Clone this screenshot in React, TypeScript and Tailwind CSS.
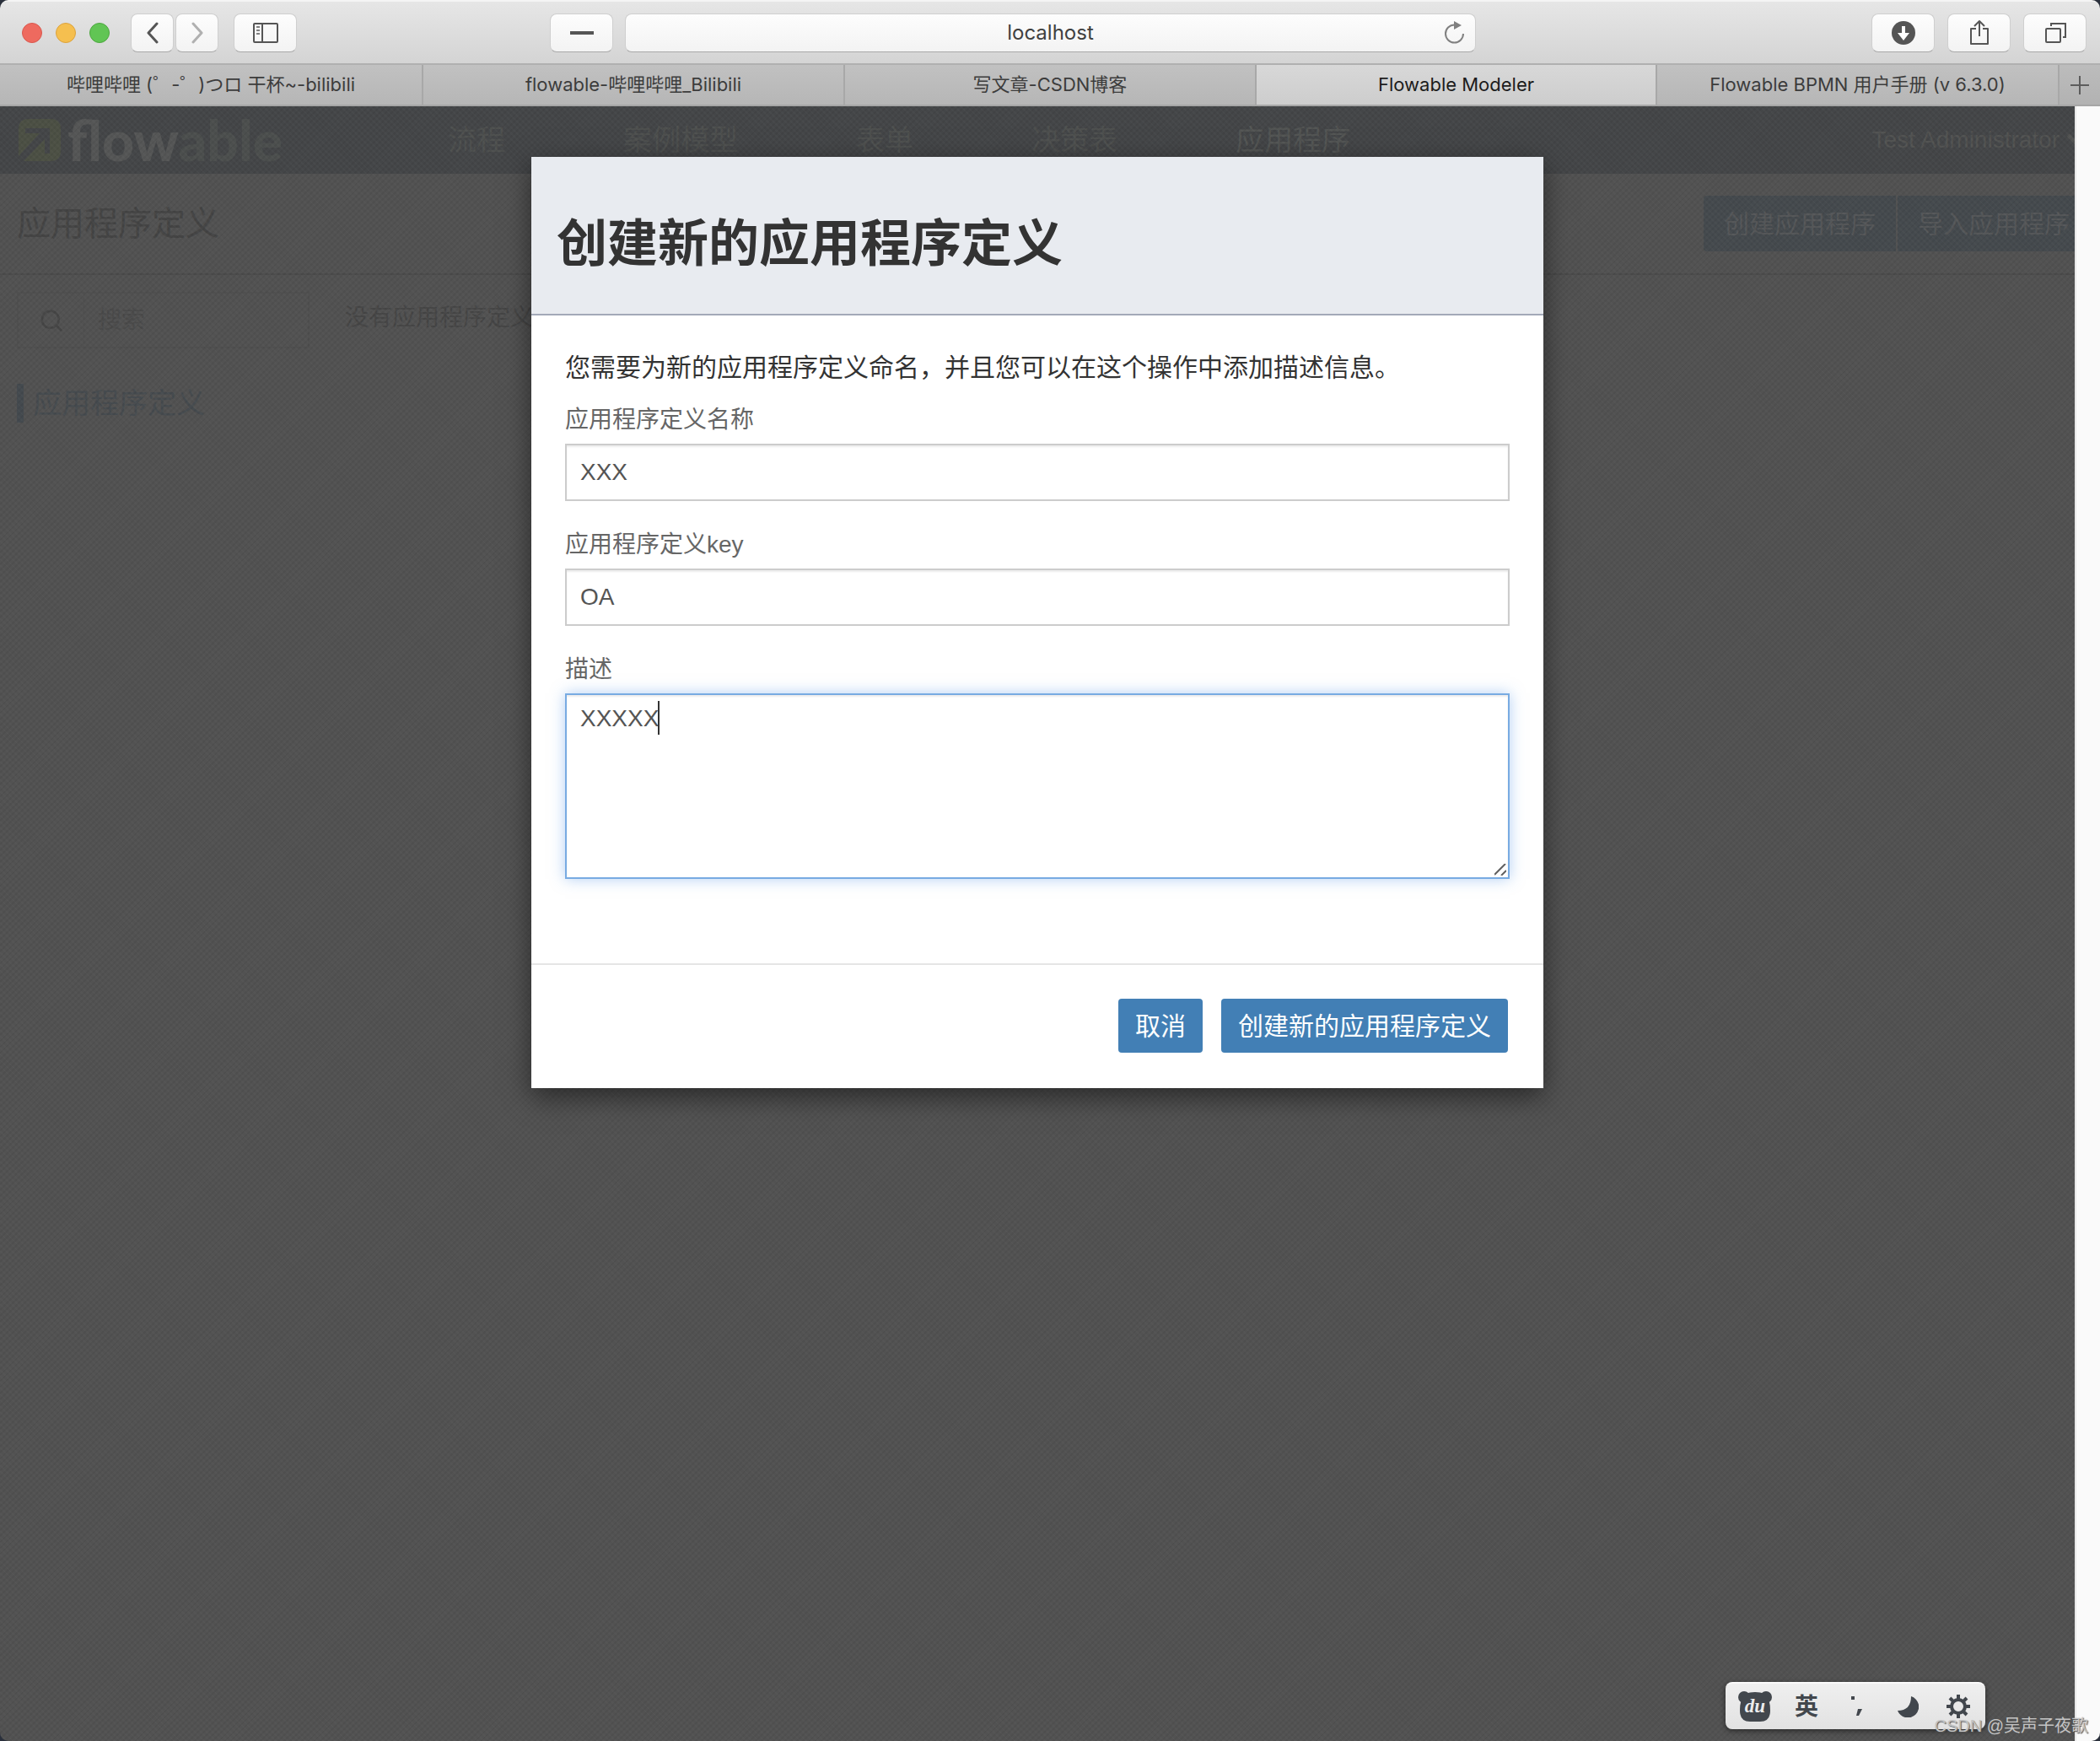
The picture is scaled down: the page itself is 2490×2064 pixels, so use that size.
import { useState } from "react";
import { LuSearch } from "react-icons/lu";

const tabs = [
	{ title: "哔哩哔哩 (゜-゜)つロ 干杯~-bilibili", active: false },
	{ title: "flowable-哔哩哔哩_Bilibili", active: false },
	{ title: "写文章-CSDN博客", active: false },
	{ title: "Flowable Modeler", active: true },
	{ title: "Flowable BPMN 用户手册 (v 6.3.0)", active: false },
];

const navItems = ["流程", "案例模型", "表单", "决策表", "应用程序"];

const toolButton =
	"h-[46px] flex items-center justify-center shrink-0 rounded-lg border border-[#cfcfcf] border-b-[#a9a9a9] bg-linear-to-b from-[#fdfdfd] to-[#f3f3f3] text-[#555555]";

function Toolbar() {
	return (
		<div className="h-[75px] grid grid-cols-[652fr_1098fr_740fr] items-center border-t-2 border-[#f4f4f4] bg-linear-to-b from-[#e6e6e6] to-[#d4d4d4]">
			<div className="flex items-center pl-[26px]">
				<div className="flex gap-4">
					<span className="size-6 rounded-full border border-[#d9584e] bg-[#ee6a5f]" />
					<span className="size-6 rounded-full border border-[#dca23c] bg-[#f5bf4f]" />
					<span className="size-6 rounded-full border border-[#4da73f] bg-[#61c554]" />
				</div>
				<div className="flex gap-0.5 ml-[25px]">
					<button aria-label="Back" className={`${toolButton} w-[51px]`}>
						<svg width="16" height="26" viewBox="0 0 16 26" fill="none" stroke="currentColor" strokeWidth="3" strokeLinecap="round" strokeLinejoin="round">
							<path d="M13 2L3 13l10 11" />
						</svg>
					</button>
					<button aria-label="Forward" className={`${toolButton} w-[51px]`}>
						<svg width="16" height="26" viewBox="0 0 16 26" fill="none" stroke="#b0b0b0" strokeWidth="3" strokeLinecap="round" strokeLinejoin="round">
							<path d="M3 2l10 11L3 24" />
						</svg>
					</button>
				</div>
				<button aria-label="Sidebar" className={`${toolButton} w-[75px] ml-[18px]`}>
					<svg width="30" height="24" viewBox="0 0 30 24" fill="none" stroke="currentColor" strokeWidth="2">
						<rect x="1" y="1" width="28" height="22" rx="1" />
						<path d="M11 1v22" />
						<path d="M4 5h4M4 9h4M4 13h4" stroke="#808080" />
					</svg>
				</button>
			</div>
			<div className="flex gap-3.5">
				<button aria-label="Tab group" className={`${toolButton} w-[75px]`}>
					<span className="w-7 h-1 bg-[#555555]" />
				</button>
				<div className={`${toolButton} min-w-0 grow relative`}>
					<input aria-label="Address" defaultValue="localhost" className="w-full bg-transparent text-center text-2xl text-[#404040] outline-none" />
					<button aria-label="Reload" className="absolute right-3 top-2 text-[#808080]">
						<svg width="24" height="28" viewBox="0 0 24 28" fill="none" stroke="currentColor" strokeWidth="2">
							<path d="M22 15a10.500 10.500 0 1 1-10.500-10.500" />
							<path d="M11 0v10L20 5z" fill="currentColor" stroke="none" />
						</svg>
					</button>
				</div>
			</div>
			<div className="flex justify-end gap-[15px] pr-4">
				<button aria-label="Downloads" className={`${toolButton} w-[75px]`}>
					<svg width="28" height="28" viewBox="0 0 28 28">
						<circle cx="14" cy="14" r="14" fill="currentColor" />
						<path d="M12 6h4v8h5l-7 9-7-9h5z" fill="#fff" />
					</svg>
				</button>
				<button aria-label="Share" className={`${toolButton} w-[75px]`}>
					<svg width="24" height="32" viewBox="0 0 24 32" fill="none" stroke="currentColor" strokeWidth="2" strokeLinejoin="round">
						<path d="M8 11H2v18h20V11h-6M12 20V2M6 8l6-6 6 6" />
					</svg>
				</button>
				<button aria-label="Show tabs" className={`${toolButton} w-[75px]`}>
					<svg width="26" height="26" viewBox="0 0 26 26" fill="none" stroke="currentColor" strokeWidth="2">
						<rect x="2" y="8" width="17" height="16" rx="1" />
						<path d="M8 5V2h17v16h-3" />
					</svg>
				</button>
			</div>
		</div>
	);
}

function TabBar() {
	return (
		<div className="h-[51px] grid grid-cols-[502fr_500fr_488fr_475fr_477fr_48px] border-t-2 border-b-2 border-t-[#b0b0b0] border-b-[#a6a6a6] text-[22px] text-[#3c3c3c]">
			{tabs.map((tab) => (
				<button
					key={tab.title}
					className={`min-w-0 truncate border-r-2 border-[#a8a8a8] ${tab.active ? "bg-linear-to-b from-[#d8d8d8] to-[#cdcdcd] text-[#1c1c1c]" : "bg-linear-to-b from-[#c1c1c1] to-[#b6b6b6]"}`}
				>
					{tab.title}
				</button>
			))}
			<button aria-label="New tab" className="flex items-center justify-center bg-linear-to-b from-[#bcbcbc] to-[#b2b2b2]">
				<svg width="22" height="22" viewBox="0 0 22 22" stroke="#5c5c5c" strokeWidth="2">
					<path d="M11 0v22M0 11h22" />
				</svg>
			</button>
		</div>
	);
}

function Logo() {
	return (
		<div className="flex items-center gap-2">
			<svg width="50" height="50" viewBox="0 0 50 50">
				<path d="M12 0h26q12 0 12 12v26q0 12-12 12H6L0 44V12Q0 0 12 0z" fill="#4c5044" />
				<path d="M8 11h29v30h-6V24L6 50l-6-6 25-27H8z" fill="#444648" />
			</svg>
			<span className="font-[Lato,sans-serif] font-black text-[66px] leading-[66px] text-[#555656]">
				flow<span className="text-[#4c4f4e]">able</span>
			</span>
		</div>
	);
}

function ModelerPage() {
	return (
		<div className="min-w-0 grow overflow-hidden whitespace-nowrap">
			<header className="h-20 flex items-center bg-[#444648] text-[#4e504f]">
				<div className="w-[531px] shrink-0 pl-[22px]">
					<Logo />
				</div>
				<nav className="flex gap-[140px] text-[34px]">
					{navItems.map((item) => (
						<a key={item} href="#" className={item === "应用程序" ? "text-[#535554]" : ""}>{item}</a>
					))}
				</nav>
				<button className="flex items-center gap-2 ml-auto -mr-3.5 text-[28px] text-[#525352]">
					Test Administrator
					<svg width="24" height="16" viewBox="0 0 24 16" fill="none" stroke="currentColor" strokeWidth="5">
						<path d="M2 2l10 10L22 2" />
					</svg>
				</button>
			</header>
			<div className="h-[120px] flex items-center justify-between pl-5 border-b-2 border-[#4b4b4b]">
				<h2 className="text-[40px] text-[#444444]">应用程序定义</h2>
				<div className="flex gap-0.5 -mr-[18px] text-[30px] text-[#555759]">
					<button className="h-[66px] px-6 rounded-l bg-[#454a4e]">创建应用程序</button>
					<button className="h-[66px] px-6 rounded-r bg-[#454a4e]">导入应用程序</button>
				</div>
			</div>
			<div className="flex gap-[42px] pl-5 pt-5 text-[28px] text-[#464646]">
				<aside className="w-[347px]">
					<label className="h-[67px] flex items-center border-2 border-[#4f4f4f]">
						<span className="w-[78px] h-full shrink-0 flex items-center justify-center border-r border-[#4f4f4f]">
							<LuSearch size={30} />
						</span>
						<input placeholder="搜索" className="min-w-0 grow pl-4 outline-none placeholder:text-[#4a4a4a]" />
					</label>
					<a href="#" className="h-[46px] flex items-center mt-[42px] pl-[11px] border-l-8 border-[#444a4f] text-[34px] text-[#464b4f]">
						应用程序定义
					</a>
				</aside>
				<p className="pt-2.5">没有应用程序定义</p>
			</div>
		</div>
	);
}

const fieldClass = "block w-full px-4 border-2 border-[#cccccc] bg-white text-[28px] text-[#555555] shadow-[inset_0_2px_2px_rgba(0,0,0,0.075)] outline-none";
const labelClass = "block h-[42px] leading-[42px] text-[28px] text-[#666666]";

function CreateAppDialog() {
	const [name, setName] = useState("XXX");
	const [key, setKey] = useState("OA");
	const [description, setDescription] = useState("XXXXX");

	return (
		<div role="dialog" aria-labelledby="dialog-title" className="w-[1200px] max-w-full bg-white shadow-[0_10px_30px_rgba(0,0,0,0.5)]">
			<div className="px-[30px] pt-[59px] pb-[37px] border-b-2 border-[#a3a9b8] bg-[#e8ebf0]">
				<h1 id="dialog-title" className="text-[60px] leading-[90px] font-bold text-[#333333]">创建新的应用程序定义</h1>
			</div>
			<form className="px-10 pt-[41px] pb-[100px]">
				<p className="h-[62px] leading-[42px] text-[30px] text-[#333333]">您需要为新的应用程序定义命名，并且您可以在这个操作中添加描述信息。</p>
				<label htmlFor="app-name" className={labelClass}>应用程序定义名称</label>
				<input id="app-name" value={name} onChange={(e) => setName(e.target.value)} className={`${fieldClass} h-[68px] mt-[7px] mb-[31px]`} />
				<label htmlFor="app-key" className={labelClass}>应用程序定义key</label>
				<input id="app-key" value={key} onChange={(e) => setKey(e.target.value)} className={`${fieldClass} h-[68px] mt-[7px] mb-[31px]`} />
				<label htmlFor="app-description" className={labelClass}>描述</label>
				<div className="relative mt-[7px]">
					<textarea
						id="app-description"
						value={description}
						onChange={(e) => setDescription(e.target.value)}
						className="block w-full h-[220px] px-4 py-2 resize-none border-2 border-[#78abe2] bg-white text-[28px] leading-10 text-[#555555] shadow-[inset_0_2px_2px_rgba(0,0,0,0.075),0_0_16px_rgba(102,160,233,0.5)] outline-none"
					/>
					<span className="absolute left-[110px] top-[9px] w-0.5 h-10 bg-[#333333]" />
					<svg className="absolute right-1 bottom-1" width="14" height="14" viewBox="0 0 14 14" stroke="#606060" strokeWidth="2">
						<path d="M0 13L13 0M8 14l6-6" />
					</svg>
				</div>
			</form>
			<div className="flex justify-end gap-[22px] pt-10 pr-[42px] pb-[42px] border-t-2 border-[#e5e5e5] text-[30px] text-white">
				<button className="h-16 px-5 rounded bg-[#427fb5]">取消</button>
				<button className="h-16 px-5 rounded bg-[#427fb5]">创建新的应用程序定义</button>
			</div>
		</div>
	);
}

function InputMethodBar() {
	return (
		<div className="absolute right-[136px] bottom-[14px] w-[308px] h-14 grid grid-cols-[62px_60px_60px_60px_60px] place-items-center pl-1 rounded-lg border-t-2 border-[#fafafa] bg-linear-to-b from-[#efefef] to-[#e2e2e2] text-[#42474d] shadow-[0_2px_6px_rgba(0,0,0,0.5)]">
			<svg width="40" height="36" viewBox="0 0 40 36" fill="currentColor">
				<circle cx="7" cy="7" r="7" />
				<circle cx="33" cy="7" r="7" />
				<path d="M8 3Q20-1 32 3q6 6 6 20 0 13-12 13H14Q2 36 2 23 2 9 8 3z" />
				<text x="20" y="25" textAnchor="middle" fill="#ececec" fontSize="23" fontStyle="italic" fontWeight="700" fontFamily="Liberation Serif, serif">du</text>
			</svg>
			<span className="text-[28px] leading-8 font-bold">英</span>
			<svg width="14" height="24" viewBox="0 0 14 24" fill="currentColor">
				<path d="M0 0h4v4H0zM8 15h5l-4 8H6z" />
			</svg>
			<svg width="26" height="26" viewBox="0 0 26 26" fill="currentColor">
				<path d="M17 1A13 13 0 1 1 1 18Q17 18 17 1z" />
			</svg>
			<svg width="28" height="28" viewBox="0 0 28 28" fill="none" stroke="currentColor" strokeWidth="4">
				<circle cx="14" cy="14" r="8" />
				<path d="M14 0v5M14 23v5M0 14h5M23 14h5M4 4l4 4M20 20l4 4M24 4l-4 4M8 20l-4 4" />
			</svg>
		</div>
	);
}

export default function App() {
	return (
		<div className="bg-[#2a303c]">
			<div className="relative min-h-screen flex flex-col overflow-hidden rounded-[10px] bg-[#525252] font-[Inter,'Noto_Sans_CJK_SC',sans-serif]">
				<Toolbar />
				<TabBar />
				<main className="relative grow flex font-['Liberation_Sans','Noto_Sans_CJK_SC',sans-serif]">
					<ModelerPage />
					<div className="w-[30px] shrink-0 border-l-2 border-[#e8e8e8] bg-[#fafafa]" />
					{/* Woven backdrop behind the dialog */}
					<div className="absolute inset-y-0 left-0 right-[30px] pointer-events-none bg-[repeating-linear-gradient(45deg,rgba(255,255,255,0.02)_0_2px,transparent_2px_5px),repeating-linear-gradient(-45deg,rgba(0,0,0,0.05)_0_2px,transparent_2px_5px)]" />
					<div className="absolute inset-x-0 top-0 flex justify-center pt-[60px] pr-[30px]">
						<CreateAppDialog />
					</div>
				</main>
				<InputMethodBar />
				<span className="absolute right-[14px] bottom-1 font-['Liberation_Sans','Noto_Sans_CJK_SC',sans-serif] text-xl text-[#c4c4c4] [text-shadow:1px_1px_1px_#555555]">CSDN @吴声子夜歌</span>
			</div>
		</div>
	);
}
